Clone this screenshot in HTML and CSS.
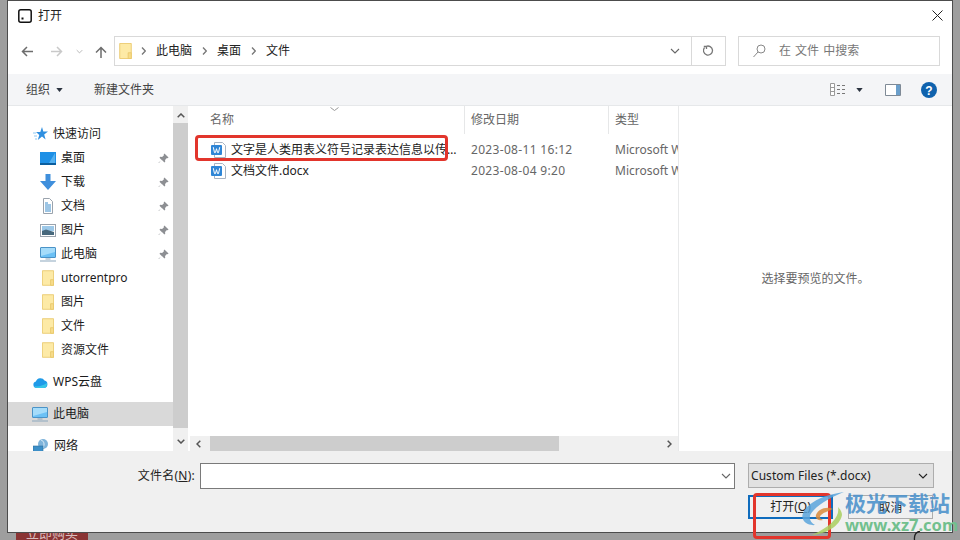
FILE: index.html
```html
<!DOCTYPE html>
<html lang="zh-CN">
<head>
<meta charset="UTF-8">
<title>打开</title>
<link rel="stylesheet" href="styles.css">
</head>
<body>
<svg class="defs" width="0" height="0">
  <symbol id="folder" viewBox="0 0 14 18">
    <path d="M.5.5h13v17H.5z" fill="#fdeaa6" stroke="#e9c86a"/>
    <path d="M10 11h3.500v6.500H10z" fill="#f7dc8a" stroke="#e9c86a"/>
  </symbol>
  <symbol id="pin" viewBox="0 0 12 12">
    <path d="M7 .5l4.500 4.500-1 .8-.8-.3-2 2 .2 2-.9.9L4 7.400 1 11 .5 10.500 4 7.500 1.600 5.100l.9-.9 2 .2 2-2-.3-.8z" fill="#8d8f93"/>
  </symbol>
  <symbol id="word" viewBox="0 0 15 16">
    <path d="M3.500.5h8l3 3v12h-11z" fill="#fff" stroke="#a9b4c2"/>
    <rect x="0" y="3" width="11" height="10" rx="1" fill="#2f86d6"/>
    <path d="M2.300 5.200l1.200 5.400h.9l1.100-3.900 1.100 3.900h.9l1.200-5.400" fill="none" stroke="#fff" stroke-width="1"/>
  </symbol>
  <symbol id="monitor" viewBox="0 0 16 15">
    <rect x=".5" y=".5" width="15" height="10" rx=".5" fill="#6cc1f5" stroke="#4b93c7"/>
    <path d="M1 1h14v4L1 9z" fill="#a5dcfa"/>
    <path d="M5.500 11.500h5v1h-5zM0 13.500h16v1H0z" fill="#8ba7bd"/>
  </symbol>
  <symbol id="tip-down" viewBox="0 0 8 5">
    <path d="M0 0h8L4 5z" fill="#2c3440"/>
  </symbol>
  <symbol id="chev-down" viewBox="0 0 10 6">
    <path d="M1 1l4 4 4-4" fill="none" stroke="currentColor" stroke-width="1.100"/>
  </symbol>
  <symbol id="chev-right" viewBox="0 0 5 8">
    <path d="M1 .5L4.300 4 1 7.500" fill="none" stroke="#777" stroke-width="1.300"/>
  </symbol>
</svg>

<div class="buy">立即购买</div>

<div class="window">
  <div class="title">
    <svg class="app-icon" width="14" height="14" viewBox="0 0 14 14"><rect x=".8" y=".8" width="12.400" height="12.400" rx="2" fill="#fff" stroke="#111" stroke-width="1.500"/><rect x="3.500" y="8.500" width="2" height="2" fill="#111"/></svg>
    <span class="title-text">打开</span>
    <svg class="close" width="11" height="11" viewBox="0 0 11 11"><path d="M.5.5l10 10M10.500.5l-10 10" stroke="#222" stroke-width="1"/></svg>
  </div>

  <div class="nav">
    <svg class="nav-btn" width="12" height="11" viewBox="0 0 12 11"><path d="M12 5.500H1.500M6 1L1.500 5.500 6 10" fill="none" stroke="#6d6d6d" stroke-width="1.500"/></svg>
    <svg class="nav-btn fwd" width="12" height="11" viewBox="0 0 12 11"><path d="M0 5.500h10.500M6 1l4.500 4.500L6 10" fill="none" stroke="#c9c9c9" stroke-width="1.500"/></svg>
    <svg class="nav-btn recent" width="7" height="5"><use href="#chev-down"/></svg>
    <svg class="nav-btn up" width="12" height="12" viewBox="0 0 12 12"><path d="M6 12V1.500M1 6.500l5-5 5 5" fill="none" stroke="#6d6d6d" stroke-width="1.500"/></svg>
    <div class="address">
      <svg class="addr-folder" width="13" height="16"><use href="#folder"/></svg>
      <svg class="sep first" width="5" height="8"><use href="#chev-right"/></svg>
      <span>此电脑</span>
      <svg class="sep" width="5" height="8"><use href="#chev-right"/></svg>
      <span>桌面</span>
      <svg class="sep" width="5" height="8"><use href="#chev-right"/></svg>
      <span>文件</span>
      <svg class="addr-drop" width="10" height="6"><use href="#chev-down"/></svg>
      <div class="refresh">
        <svg width="11" height="12" viewBox="0 0 11 12"><path d="M3 1.500a4.500 4.500 0 1 1-1.500 1.200M.8 1.500H3.500V4" fill="none" stroke="#777" stroke-width="1.300"/></svg>
      </div>
    </div>
    <div class="search">
      <svg width="13" height="14" viewBox="0 0 13 14"><circle cx="8" cy="5" r="4" fill="none" stroke="#888"/><path d="M5 8l-4.500 5" stroke="#888"/></svg>
      <span>在 文件 中搜索</span>
    </div>
  </div>

  <div class="toolbar">
    <span class="tool">组织</span>
    <svg class="tool-tip" width="7" height="4"><use href="#tip-down"/></svg>
    <span class="tool new-folder">新建文件夹</span>
    <svg class="view-icon" width="16" height="13" viewBox="0 0 16 13"><path d="M.5.500h4v12h-4zM.5 4.500h4M.5 8.500h4" fill="#fff" stroke="#9a9a9a"/><path d="M7 2.500h3M12 2.500h3M7 6.500h3M12 6.500h3M7 10.500h3M12 10.500h3" stroke="#777"/></svg>
    <svg class="tool-tip view-tip" width="7" height="4"><use href="#tip-down"/></svg>
    <svg class="pane-icon" width="16" height="12" viewBox="0 0 16 12"><path d="M.5.500h15v11H.5z" fill="#fff" stroke="#7f8a96"/><path d="M11 1h4v10h-4z" fill="#6b9fcb"/></svg>
    <svg class="help" width="16" height="16" viewBox="0 0 16 16"><circle cx="8" cy="8" r="8" fill="#0f62ad"/><text x="8" y="12.500" text-anchor="middle" class="help-mark">?</text></svg>
  </div>

  <div class="main">
    <div class="sidebar">
      <div class="side-row top">
        <svg width="15" height="14" viewBox="0 0 15 14"><path d="M9 0l1.300 4.500H15l-3.800 3 1.400 5L9 9.600 4.800 13l1.500-5L3 5h4.300z" fill="#2f8fe0"/><path d="M0 6h3M1 9h3M2 12h2" stroke="#8fc8f2"/></svg>
        <span>快速访问</span>
      </div>
      <div class="side-row">
        <svg width="16" height="13" viewBox="0 0 16 13"><rect width="16" height="12" fill="#1e90e6"/><path d="M0 11h16v2H0z" fill="#0b5e9e"/><path d="M9 11L15 1v10z" fill="#55b1f0"/></svg>
        <span>桌面</span><svg class="pin" width="11" height="11"><use href="#pin"/></svg>
      </div>
      <div class="side-row">
        <svg width="16" height="16" viewBox="0 0 16 16"><path d="M5.500 0h5v7H16l-8 9-8-9h5.500z" fill="#3f8fdc"/></svg>
        <span>下载</span><svg class="pin" width="11" height="11"><use href="#pin"/></svg>
      </div>
      <div class="side-row">
        <svg width="16" height="16" viewBox="0 0 16 16"><path d="M3.500.5h6l3 3v12h-9z" fill="#fff" stroke="#9aa3ad"/><path d="M5 5h3M5 7h6M5 9h6M5 11h6M5 13h6" stroke="#3b8ccb"/></svg>
        <span>文档</span><svg class="pin" width="11" height="11"><use href="#pin"/></svg>
      </div>
      <div class="side-row">
        <svg width="16" height="13" viewBox="0 0 16 13"><rect x=".5" y=".5" width="15" height="12" fill="#fff" stroke="#9aa3ad"/><rect x="2" y="2" width="12" height="5" fill="#9cc8e8"/><path d="M2 7l4-1.500L14 8v3H2z" fill="#47687c"/></svg>
        <span>图片</span><svg class="pin" width="11" height="11"><use href="#pin"/></svg>
      </div>
      <div class="side-row">
        <svg width="16" height="15"><use href="#monitor"/></svg>
        <span>此电脑</span><svg class="pin" width="11" height="11"><use href="#pin"/></svg>
      </div>
      <div class="side-row"><svg class="f" width="12" height="16"><use href="#folder"/></svg><span>utorrentpro</span></div>
      <div class="side-row"><svg class="f" width="12" height="16"><use href="#folder"/></svg><span>图片</span></div>
      <div class="side-row"><svg class="f" width="12" height="16"><use href="#folder"/></svg><span>文件</span></div>
      <div class="side-row"><svg class="f" width="12" height="16"><use href="#folder"/></svg><span>资源文件</span></div>
      <div class="side-row top group">
        <svg width="15" height="11" viewBox="0 0 15 11"><path d="M3.500 11a3.300 3.300 0 0 1-.6-6.500A4.700 4.700 0 0 1 11.500 3.600 3.800 3.800 0 0 1 11.500 11z" fill="#1f9ae8"/><path d="M1 9c4 1 8 0 13-3 0 3-1 5-3 5H3.500z" fill="#37c6e8"/></svg>
        <span>WPS云盘</span>
      </div>
      <div class="side-row top group selected">
        <svg width="16" height="15"><use href="#monitor"/></svg>
        <span>此电脑</span>
      </div>
      <div class="side-row top group">
        <svg width="16" height="15" viewBox="0 0 16 15"><circle cx="10" cy="5" r="5" fill="#7fb4da"/><path d="M8 1c3 1 4 4 2 8" fill="none" stroke="#dcecf7"/><rect x="0" y="7" width="10" height="7" fill="#3c8fc8" stroke="#2b6f9f" stroke-width=".6"/></svg>
        <span>网络</span>
      </div>
    </div>

    <div class="vscroll">
      <svg class="arrow" width="8" height="5" viewBox="0 0 8 5"><path d="M.7 4.300L4 1l3.300 3.300" fill="none" stroke="#555" stroke-width="1.500"/></svg>
      <div class="vthumb"></div>
      <svg class="arrow" width="8" height="5" viewBox="0 0 8 5"><path d="M.7.700L4 4 7.300.700" fill="none" stroke="#555" stroke-width="1.500"/></svg>
    </div>

    <div class="list">
      <div class="list-head">
        <div class="col-name">名称</div>
        <div class="col-date">修改日期</div>
        <div class="col-type">类型</div>
        <svg class="sort" width="9" height="4" viewBox="0 0 9 4"><path d="M.5.500l4 3 4-3" fill="none" stroke="#999"/></svg>
      </div>
      <div class="list-body">
        <div class="file">
          <div class="file-name">
            <svg width="15" height="16"><use href="#word"/></svg>
            <span>文字是人类用表义符号记录表达信息以传递知识的工具.docx</span>
          </div>
          <div class="file-date">2023-08-11 16:12</div>
          <div class="file-type">Microsoft Word 文档</div>
        </div>
        <div class="file">
          <div class="file-name">
            <svg width="15" height="16"><use href="#word"/></svg>
            <span>文档文件.docx</span>
          </div>
          <div class="file-date">2023-08-04 9:20</div>
          <div class="file-type">Microsoft Word 文档</div>
        </div>
      </div>
      <div class="hscroll">
        <svg width="5" height="8" viewBox="0 0 5 8"><path d="M4.300.700L1 4l3.300 3.300" fill="none" stroke="#555" stroke-width="1.500"/></svg>
        <div class="hthumb"></div>
        <svg class="h-right" width="5" height="8" viewBox="0 0 5 8"><path d="M.7.700L4 4 .7 7.300" fill="none" stroke="#555" stroke-width="1.500"/></svg>
      </div>
    </div>

    <div class="preview">选择要预览的文件。</div>
  </div>

  <div class="footer">
    <div class="foot-row">
      <label class="name-label">文件名(<u>N</u>):</label>
      <div class="name-input"><svg width="10" height="6"><use href="#chev-down"/></svg></div>
      <div class="filter">
        <span>Custom Files (*.docx)</span>
        <svg width="10" height="6"><use href="#chev-down"/></svg>
      </div>
    </div>
    <div class="foot-row buttons">
      <div class="btn primary">打开(<u>O</u>)</div>
      <div class="btn">取消</div>
    </div>
  </div>
</div>

<div class="mark mark-file"></div>
<div class="mark mark-open"></div>

<div class="watermark">
  <svg class="wm-logo" width="46" height="46" viewBox="0 0 46 46">
    <path d="M44 1C28 3 8 10 3 22c-3 8 5 13 12 12C9 31 8 25 13 20 20 12 32 6 44 1z" fill="#5aa5dc" opacity=".85"/>
    <path d="M33 18c-6-3-15 0-17 6-1 4 3 6 7 5-3-1-4-3-2-5 3-3 8-4 12-6z" fill="#d98a3a" opacity=".85"/>
    <path d="M38 16c2 9-6 19-26 28 14-1 28-9 30-20 0-3-2-6-4-8z" fill="#a9cf5f" opacity=".85"/>
  </svg>
  <div class="wm-text">
    <div class="wm-cn">极光下载站</div>
    <div class="wm-url">www.xz7.com</div>
  </div>
</div>
<svg class="scrap" width="8" height="9" viewBox="0 0 8 9"><path d="M7 0C3 1 1 4 1.500 9" fill="none" stroke="#222" stroke-width="1.300"/></svg>
</body>
</html>
```

FILE: styles.css
```css
html,body{margin:0;padding:0;overflow:hidden;}
body{position:relative;width:960px;height:540px;background:#9e9e9e;font:12px/16px "Noto Sans","Noto Sans CJK SC",sans-serif;color:#222;}
.defs{position:absolute;}
svg{display:block;flex:none;}
u{text-decoration:underline;}

.buy{position:absolute;left:16px;top:520px;width:72px;height:20px;background:#8a3434;color:#d9bcbc;text-align:center;line-height:26px;font-size:13px;}

.window{position:absolute;left:7px;top:0;width:944px;height:531px;border:1px solid #4c4c4c;background:#fff;display:flex;flex-direction:column;}

.title{height:29px;display:flex;align-items:center;padding-left:10px;flex:none;}
.title-text{margin-left:6px;font-size:12px;color:#222;}
.close{margin-left:auto;margin-right:9px;}

.nav{height:44px;flex:none;display:flex;align-items:flex-start;padding-top:6px;box-sizing:border-box;}
.nav-btn{margin-top:10px;margin-left:18px;margin-right:0;}
.nav-btn:first-child{margin-left:13px;}
.nav-btn.fwd{margin-left:18px;}
.nav-btn.recent{margin-left:13px;margin-top:13px;color:#a5a5a5;}
.nav-btn.up{margin-left:12px;}
.address{margin-left:7px;width:612px;height:30px;box-sizing:border-box;border:1px solid #d9d9d9;display:flex;align-items:center;padding-left:4px;color:#222;}
.addr-folder{margin-right:9px;}
.sep{margin:0 10px;}
.sep.first{margin-left:0;}
.addr-drop{margin-left:auto;margin-right:11px;color:#666;}
.refresh{width:34px;height:28px;border-left:1px solid #d9d9d9;display:flex;align-items:center;justify-content:center;box-sizing:border-box;}
.search{margin-left:12px;width:202px;height:30px;box-sizing:border-box;border:1px solid #d9d9d9;display:flex;align-items:center;padding-left:14px;color:#777;}
.search span{margin-left:13px;word-spacing:1px;}

.toolbar{height:32px;flex:none;box-sizing:border-box;background:#f4f5f7;border-bottom:1px solid #e6e8ea;display:flex;align-items:center;padding-left:18px;color:#444;}
.tool-tip{margin-left:6px;}
.new-folder{margin-left:31px;}
.view-icon{margin-left:auto;}
.view-tip{margin-left:10px;}
.pane-icon{margin-left:22px;}
.help{margin-left:20px;margin-right:15px;}
.help-mark{fill:#fff;font:bold 12px "Liberation Sans",sans-serif;}

.main{height:345px;flex:none;display:flex;background:#fff;overflow:hidden;}
.sidebar{width:165px;flex:none;padding-top:16px;box-sizing:border-box;color:#1c1c1c;overflow:hidden;}
.side-row{height:24px;display:flex;align-items:center;padding-left:32px;}
.side-row>span{margin-left:5px;}
.side-row .f{margin:0 2px 0 2px;}
.side-row.top{padding-left:25px;}
.side-row.group{margin-top:8px;}
.side-row.selected{background:#d9d9d9;width:164px;padding-left:24px;}
.pin{margin-left:auto;margin-right:4px;}

.vscroll{width:15px;flex:none;background:#f0f0f0;display:flex;flex-direction:column;align-items:center;justify-content:space-between;padding:7px 0;box-sizing:border-box;position:relative;}
.vthumb{position:absolute;left:0;top:17px;width:15px;height:305px;background:#cdcdcd;}
.list{width:489px;margin-left:2px;flex:none;box-sizing:border-box;border-right:1px solid #e8e9ea;display:flex;flex-direction:column;overflow:hidden;}
.list-head{height:28px;flex:none;display:grid;grid-template-columns:275px 144px 1fr;color:#666;position:relative;}
.list-head>div{line-height:28px;box-sizing:border-box;padding-left:6px;border-right:1px solid #e6e7e8;}
.list-head .col-name{padding-left:20px;}
.list-head .col-type{border-right:none;}
.sort{position:absolute;left:140px;top:1px;}
.list-body{flex:1;padding-top:5px;}
.file{height:21px;display:grid;grid-template-columns:275px 144px 1fr;align-items:center;color:#666;}
.file-name{display:flex;align-items:center;padding-left:21px;padding-right:5px;color:#222;overflow:hidden;}
.file-name span{margin-left:5px;white-space:nowrap;overflow:hidden;text-overflow:ellipsis;min-width:0;}
.file-date{padding-left:6px;letter-spacing:.32px;}
.file-type{padding-left:6px;white-space:nowrap;overflow:hidden;}
.hscroll{height:15px;flex:none;background:#f0f0f0;display:flex;align-items:center;padding-left:6px;}
.hthumb{width:349px;height:15px;background:#cdcdcd;margin-left:9px;}
.h-right{margin-left:auto;margin-right:6px;}
.preview{flex:1;display:flex;align-items:center;justify-content:center;color:#666;box-sizing:border-box;}

.footer{flex:1;background:#f0f0f0;display:flex;flex-direction:column;gap:6px;padding:12px 18px 0 0;box-sizing:border-box;}
.foot-row{display:flex;align-items:flex-start;}
.name-label{flex:1;text-align:right;margin-right:5px;line-height:25px;color:#222;letter-spacing:.25px;}
.name-input{width:535px;height:26px;box-sizing:border-box;border:1px solid #7a7a7a;background:#fff;display:flex;align-items:center;justify-content:flex-end;padding-right:3px;color:#666;margin-right:13px;}
.filter{width:186px;height:25px;box-sizing:border-box;border:1px solid #adadad;background:#e1e1e1;display:flex;align-items:center;justify-content:space-between;padding:0 5px 0 2px;color:#222;letter-spacing:.05px;}
.buttons{justify-content:flex-end;gap:15px;padding-right:1px;}
.btn{width:85px;height:24px;box-sizing:border-box;border:1px solid #adadad;background:#f0f0f0;text-align:center;line-height:23px;color:#222;}
.btn.primary{border:2px solid #0f6cbd;line-height:20px;}

.mark{position:absolute;border:3px solid #e2352c;border-radius:4px;box-sizing:border-box;}
.mark-file{left:195px;top:135px;width:253px;height:26px;}
.mark-open{left:753px;top:493px;width:78px;height:46px;}

.watermark{position:absolute;left:800px;top:489px;display:flex;align-items:flex-start;}
.wm-logo{margin-top:2px;}
.wm-text{margin-left:-1px;}
.wm-cn{font:bold 21px/26px "Noto Sans CJK SC",sans-serif;color:#4f93cc;white-space:nowrap;opacity:.9;}
.wm-url{font:bold 16.5px/20px "Noto Sans",sans-serif;color:#72c08e;white-space:nowrap;}
.scrap{position:absolute;left:913px;top:531px;}
```
